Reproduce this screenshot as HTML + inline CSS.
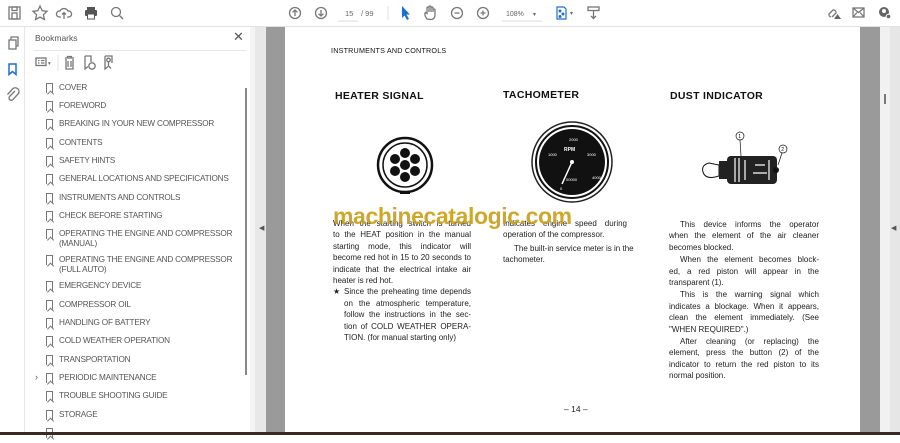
<!DOCTYPE html>
<html><head><meta charset="utf-8"><style>
*{margin:0;padding:0;box-sizing:border-box}
body{width:900px;height:435px;overflow:hidden;background:#fff;font-family:"Liberation Sans",sans-serif;position:relative}
.abs{position:absolute}
.tb{left:0;top:0;width:900px;height:27px;background:#fff;border-bottom:1px solid #e2e2e2}
.rail{left:0;top:27px;width:25px;height:408px;background:#fff;border-right:1px solid #e6e6e6}
.panel{left:26px;top:27px;width:229px;height:408px;background:#fff}
.bm{position:absolute;left:33px;font-size:8.2px;letter-spacing:-0.2px;color:#555;white-space:nowrap;line-height:10px}
.bm i{position:absolute;left:-13px;top:0;width:7px;height:10px;border:1.2px solid #777;border-bottom:none}
.bm i:after{content:"";position:absolute;left:0.2px;bottom:-1px;width:4px;height:4px;border-left:1.2px solid #777;border-top:1.2px solid #777;transform:rotate(45deg);transform-origin:0 100%;}
.pg{font-family:"Liberation Sans",sans-serif;color:#222;font-size:8px;line-height:11.4px}
.pg div{text-align:justify;text-align-last:justify;white-space:nowrap}
.pg div.l{text-align-last:left}
.pg div.in{padding-left:11px}
.pg div.gap{margin-top:1px}
h3{position:absolute;font-size:10.5px;font-weight:bold;color:#111;letter-spacing:0.3px}
.ic{stroke:#777;fill:none;stroke-width:1.3}
</style></head><body>
<div class="abs tb"></div>
<svg class="abs" style="left:0;top:0" width="900" height="27">
<g class="ic" stroke="#aaa"><rect x="9" y="7" width="11" height="12"/><rect x="12" y="7" width="5" height="3.5"/><rect x="12" y="13" width="5" height="6"/></g>
<path class="ic" d="M40 6 L42.2 10.8 L47 11.3 L43.4 14.7 L44.4 19.5 L40 17 L35.6 19.5 L36.6 14.7 L33 11.3 L37.8 10.8Z"/>
<path class="ic" stroke="#bbb" d="M61 17 H59 A3 3 0 0 1 60 11 A4.5 4.5 0 0 1 68 11 A3 3 0 0 1 69 17 H67 M64 19 V12.5 M62 14.5 L64 12.5 L66 14.5"/>
<g fill="#555"><rect x="87" y="7" width="8" height="3"/><rect x="85" y="10" width="12" height="6" rx="1"/><rect x="87.5" y="14" width="7" height="5" fill="#fff" stroke="#555"/></g>
<g class="ic" stroke="#555"><circle cx="116" cy="12" r="4.5"/><path d="M119.5 15.5 L123 19"/></g>
<g class="ic" stroke="#555"><circle cx="295" cy="13" r="5.5"/><path d="M295 16V10M292.5 12.3L295 10L297.5 12.3"/><circle cx="321" cy="13" r="5.5"/><path d="M321 10V16M318.5 13.7L321 16L323.5 13.7"/></g>
<text x="345" y="16" font-size="7.5" fill="#666">15</text><text x="361" y="16" font-size="7.5" fill="#666">/ 99</text>
<line x1="338" y1="21" x2="358" y2="21" stroke="#ddd"/>
<line x1="388" y1="6" x2="388" y2="20" stroke="#e0e0e0"/>
<path d="M402 6 L402 18 L404.5 15.5 L407 20 L409 19 L406.5 14.5 L410 14.5Z" fill="#1f6fd1"/>
<path class="ic" stroke="#555" d="M427 19 C424.5 16 424.5 13.5 425.5 12.5 L427 13.5 V8 A1 1 0 0 1 429 8 V12 V7 A1 1 0 0 1 431 7 V12 V8 A1 1 0 0 1 433 8 V12 V10 A1 1 0 0 1 435 10 V15 C435 18 433 19.5 431 19.5 Z"/>
<g class="ic" stroke="#555"><circle cx="457" cy="13" r="5.5"/><path d="M454.5 13H459.5"/><circle cx="483" cy="13" r="5.5"/><path d="M480.5 13H485.5M483 10.5V15.5"/></g>
<text x="506" y="16" font-size="7" fill="#666">108%</text><text x="533" y="16" font-size="6" fill="#666">▾</text>
<line x1="502" y1="21" x2="542" y2="21" stroke="#ddd"/>
<g stroke="#1f6fd1" fill="none" stroke-width="1.2"><path d="M557 7H564L566 9V19H557Z"/><circle cx="560" cy="11" r="0.9" fill="#1f6fd1"/><circle cx="563" cy="14" r="0.9" fill="#1f6fd1"/><circle cx="560" cy="16.5" r="0.9" fill="#1f6fd1"/></g>
<text x="570" y="15" font-size="6" fill="#666">▾</text>
<g class="ic" stroke="#777"><rect x="588" y="7" width="11" height="3.5"/><path d="M593.5 11V18.5M591 16L593.5 18.5L596 16"/></g>
<g class="ic" stroke="#666"><path d="M831 17 A2.5 2.5 0 0 1 829 14 L833 10 A2.5 2.5 0 0 1 836 13 L832 17"/><path d="M834 19H841L837.5 14Z" fill="#666" stroke="none"/></g>
<g class="ic" stroke="#888"><rect x="853" y="8" width="11" height="9"/><path d="M853 8L858.5 12.5L864 8M853 17L857 12.5M864 17L860 12.5"/></g>
<g fill="#666"><circle cx="884" cy="12" r="5"/><circle cx="884" cy="11" r="2" fill="#fff"/><circle cx="888.5" cy="16.5" r="2.3" fill="#666" stroke="#fff"/></g>
</svg>
<div class="abs rail"></div>
<svg class="abs" style="left:0;top:27px" width="26" height="90">
<g class="ic" stroke="#666"><rect x="9" y="13" width="7" height="9"/><path d="M11 13V10H18V19H16"/></g>
<path d="M9 37V47.5L12.5 44.5L16 47.5V37Z" fill="none" stroke="#1f6fd1" stroke-width="1.5"/>
<path class="ic" stroke="#666" d="M15 64 L9.5 69.5 A2.3 2.3 0 0 0 13 72.5 L18.5 66.5 A3.8 3.8 0 0 0 13 61.5 L7.5 67.5"/>
</svg>
<div class="abs panel">
 <div class="abs" style="left:9px;top:6px;font-size:8.5px;color:#555">Bookmarks</div>
 <div class="abs" style="left:207px;top:2px;font-size:13px;color:#555">✕</div>
 <div class="abs" style="left:8px;top:23px;width:212px;height:1px;background:#e6e6e6"></div>
 <svg class="abs" style="left:0;top:24px" width="229" height="24">
  <g class="ic" stroke="#666" stroke-width="1"><rect x="10" y="7" width="10" height="7.5"/><path d="M12 9.5H13.5M15 9.5H18.5M12 12H13.5M15 12H18.5"/></g>
  <text x="22" y="14" font-size="5.5" fill="#666">▾</text>
  <line x1="32" y1="4" x2="32" y2="20" stroke="#e0e0e0"/>
  <g class="ic" stroke="#666" stroke-width="1"><path d="M39 7H48M41.5 7V5.5H45.5V7M40 8V18H47V8M42 10V16M45 10V16"/>
  <path d="M59 5V18L62 15.5M59 5H65V11"/><circle cx="66" cy="15" r="3.2"/>
  <path d="M79 5H86V12M79 5V18L82 15.5"/><circle cx="82.5" cy="9" r="1.8"/><path d="M82.5 11V15L85 17.5"/></g>
 </svg>
 <div class="abs" style="left:219px;top:61px;width:1.5px;height:287px;background:#888"></div>
</div>
<div class="abs" style="left:26px;top:27px">
<div class="bm" style="top:56px"><i></i>COVER</div>
<div class="bm" style="top:74px"><i></i>FOREWORD</div>
<div class="bm" style="top:92px"><i></i>BREAKING IN YOUR NEW COMPRESSOR</div>
<div class="bm" style="top:111px"><i></i>CONTENTS</div>
<div class="bm" style="top:129px"><i></i>SAFETY HINTS</div>
<div class="bm" style="top:147px"><i></i>GENERAL LOCATIONS AND SPECIFICATIONS</div>
<div class="bm" style="top:166px"><i></i>INSTRUMENTS AND CONTROLS</div>
<div class="bm" style="top:184px"><i></i>CHECK BEFORE STARTING</div>
<div class="bm" style="top:202px"><i></i>OPERATING THE ENGINE AND COMPRESSOR<br>(MANUAL)</div>
<div class="bm" style="top:228px"><i></i>OPERATING THE ENGINE AND COMPRESSOR<br>(FULL AUTO)</div>
<div class="bm" style="top:254px"><i></i>EMERGENCY DEVICE</div>
<div class="bm" style="top:273px"><i></i>COMPRESSOR OIL</div>
<div class="bm" style="top:291px"><i></i>HANDLING OF BATTERY</div>
<div class="bm" style="top:309px"><i></i>COLD WEATHER OPERATION</div>
<div class="bm" style="top:328px"><i></i>TRANSPORTATION</div>
<div class="bm" style="top:346px"><i></i>PERIODIC MAINTENANCE<span style="position:absolute;left:-24px;top:-1px;font-size:9px">›</span></div>
<div class="bm" style="top:364px"><i></i>TROUBLE SHOOTING GUIDE</div>
<div class="bm" style="top:383px"><i></i>STORAGE</div>
<div class="bm" style="top:401px"><i></i></div>
</div>
<div class="abs" style="left:250px;top:27px;width:5px;height:408px;background:#f3f3f3"></div>
<div class="abs" style="left:255px;top:27px;width:11px;height:408px;background:#e8e8e8"></div>
<div class="abs" style="left:259px;top:224px;font-size:7px;color:#555">◀</div>
<div class="abs" style="left:266px;top:27px;width:19px;height:408px;background:#9a9a9a"></div>
<div class="abs" style="left:860px;top:27px;width:20px;height:408px;background:#9a9a9a"></div>
<div class="abs" style="left:880px;top:27px;width:10px;height:408px;background:#f1f1f1"></div>
<div class="abs" style="left:890px;top:27px;width:10px;height:408px;background:#e6e6e6"></div>
<div class="abs" style="left:884px;top:94px;width:1.5px;height:10px;background:#777"></div>
<div class="abs" style="left:891px;top:224px;font-size:7px;color:#555">◀</div>
<div class="abs" style="left:0;top:432px;width:900px;height:3px;background:#3a2a26"></div>

<div class="abs" style="left:331px;top:46px;font-size:7.2px;color:#111;letter-spacing:0.2px">INSTRUMENTS AND CONTROLS</div>
<h3 style="left:335px;top:90px">HEATER SIGNAL</h3>
<h3 style="left:503px;top:89px">TACHOMETER</h3>
<h3 style="left:670px;top:90px">DUST INDICATOR</h3>
<svg class="abs" style="left:330px;top:120px" width="520" height="90">
 <circle cx="75" cy="45" r="27" fill="#fff" stroke="#111" stroke-width="2.5"/>
 <circle cx="75" cy="45" r="22" fill="#fff" stroke="#111" stroke-width="1.5"/>
 <g fill="#111"><circle cx="75" cy="45" r="5"/><circle cx="75" cy="33" r="5"/><circle cx="75" cy="57" r="5"/><circle cx="65" cy="39" r="5"/><circle cx="85" cy="39" r="5"/><circle cx="65" cy="51" r="5"/><circle cx="85" cy="51" r="5"/></g>
 <rect x="70" y="71" width="10" height="3" fill="#111"/>
 <circle cx="242" cy="42" r="40" fill="#fff" stroke="#222" stroke-width="1.5"/>
 <circle cx="242" cy="42" r="36" fill="#fff" stroke="#111" stroke-width="2"/>
 <circle cx="242" cy="42" r="33" fill="#111"/>
 <g fill="#fff" font-size="4" font-family="Liberation Sans"><text x="239" y="21">2000</text><text x="234" y="31" font-size="5" font-weight="bold">RPM</text><text x="218" y="36">1000</text><text x="257" y="36">3000</text><text x="230" y="70">0</text><text x="262" y="59">4000</text><text x="236" y="61">00000</text></g>
 <path d="M242 42 L232 64" stroke="#fff" stroke-width="1.5"/>
 <circle cx="242" cy="42" r="2" fill="#fff"/>
 <g transform="translate(365,5)">
  <path d="M14 38 Q6 40 8 47 Q10 54 20 52 L24 51 L24 40Z" fill="#fff" stroke="#111"/>
  <rect x="24" y="36" width="8" height="18" fill="#222"/>
  <rect x="32" y="31" width="50" height="28" rx="4" fill="#222"/>
  <g stroke="#fff" stroke-width="1.2"><path d="M40 33V57M44 33V57M50 35L50 55M60 40H70M58 48H72M74 35V55"/></g>
  <circle cx="81" cy="45" r="3" fill="#111"/>
  <circle cx="45" cy="11" r="4" fill="none" stroke="#111" stroke-width="0.7"/><text x="43.3" y="13" font-size="5">1</text>
  <path d="M45 15 L46 31" stroke="#111" stroke-width="0.7"/>
  <circle cx="88" cy="24" r="4" fill="none" stroke="#111" stroke-width="0.7"/><text x="86.3" y="26" font-size="5">2</text>
  <path d="M87 28 L83 40" stroke="#111" stroke-width="0.7"/>
 </g>
</svg>
<div class="abs pg" style="left:333px;top:218px;width:138px">
<div>When the starting switch is turned</div>
<div>to the HEAT position in the manual</div>
<div>starting mode, this indicator will</div>
<div>become red hot in 15 to 20 seconds to</div>
<div>indicate that the electrical intake air</div>
<div class="l">heater is red hot.</div>
<div style="position:relative" class="in"><span style="position:absolute;left:0">★</span>Since the preheating time depends</div>
<div class="in">on the atmospheric temperature,</div>
<div class="in">follow the instructions in the sec-</div>
<div class="in">tion of COLD WEATHER OPERA-</div>
<div class="in l">TION. (for manual starting only)</div>
</div>
<div class="abs pg" style="left:503px;top:218px;width:124px">
<div>Indicates engine speed during</div>
<div class="l">operation of the compressor.</div>
<div class="in gap" style="margin-top:2px">The built-in service meter is in the</div>
<div class="l">tachometer.</div>
</div>
<div class="abs pg" style="left:669px;top:219px;width:150px">
<div class="in">This device informs the operator</div>
<div>when the element of the air cleaner</div>
<div class="l">becomes blocked.</div>
<div class="in gap">When the element becomes block-</div>
<div>ed, a red piston will appear in the</div>
<div class="l">transparent (1).</div>
<div class="in gap">This is the warning signal which</div>
<div>indicates a blockage. When it appears,</div>
<div>clean the element immediately. (See</div>
<div class="l">"WHEN REQUIRED".)</div>
<div class="in gap">After cleaning (or replacing) the</div>
<div>element, press the button (2) of the</div>
<div>indicator to return the red piston to its</div>
<div class="l">normal position.</div>
</div>
<div class="abs" style="left:564px;top:404px;font-size:8.5px;color:#222">– 14 –</div>
<div class="abs" style="left:333px;top:203px;font-size:23px;font-weight:bold;color:#c9a11a;letter-spacing:-0.4px;opacity:0.92">machinecatalogic.com</div>
</body></html>
